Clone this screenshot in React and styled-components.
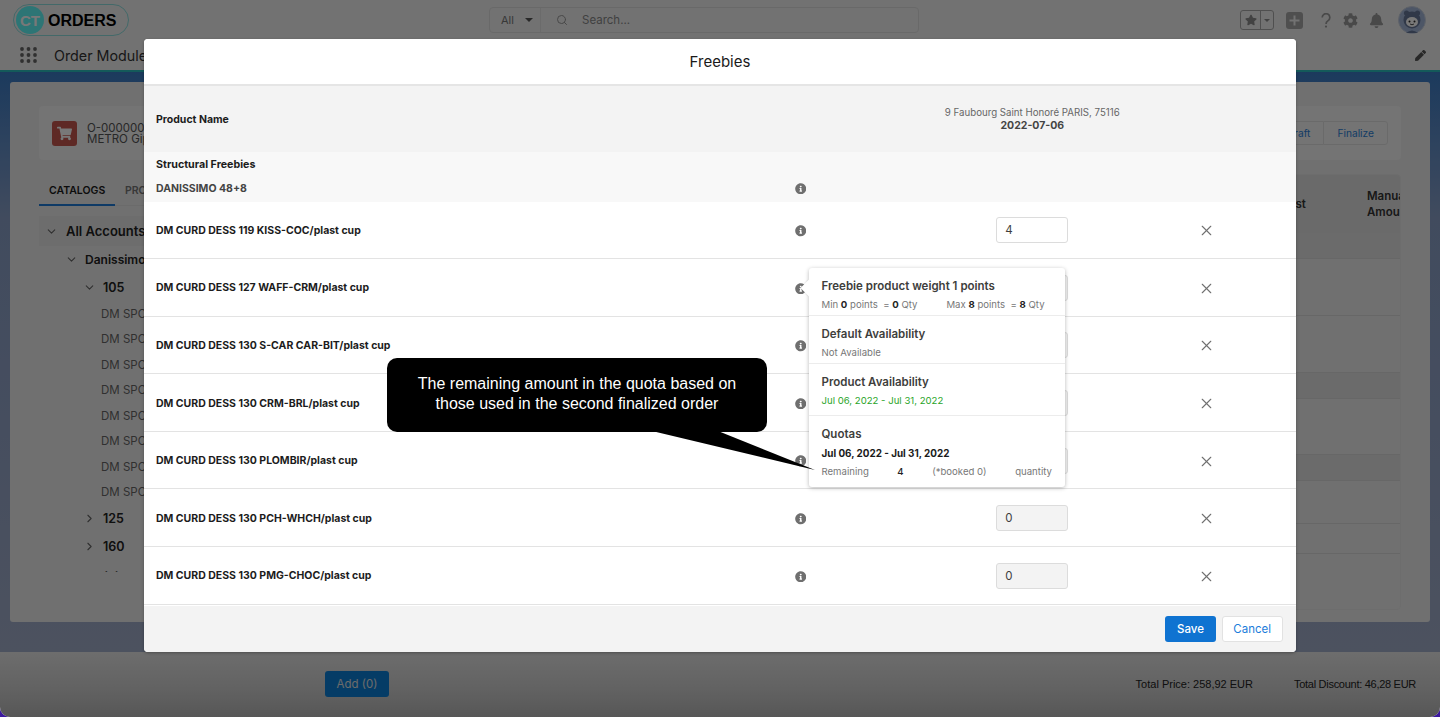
import React from 'react';
import styled, { createGlobalStyle } from 'styled-components';
import { ChevronDown, ChevronRight, Search, X } from 'lucide-react';
import { FaBell, FaCog, FaInfoCircle, FaPen, FaShoppingCart, FaStar } from 'react-icons/fa';

const Global = createGlobalStyle`
  html, body { margin: 0; height: 717px; overflow: hidden; background: #3d1aa0; }
  body { font-family: Inter, "Liberation Sans", sans-serif; }
  * { box-sizing: border-box; }
`;

const Shell = styled.div`
  position: relative; width: 1440px; height: 717px; display: flex; flex-direction: column;
  overflow: hidden; border-radius: 0 0 10px 10px; background: #eee;
`;
const TopBar = styled.header`
  height: 40px; flex: none; display: flex; align-items: center; padding: 0 14px 0 13px; background: #f2f2f2;
`;
const LogoPill = styled.div`
  width: 116px; height: 32px; display: flex; align-items: center; gap: 4px; padding-left: 2px;
  border: 1px solid #8fe0e0; border-radius: 16px;
`;
const LogoMark = styled.div`
  width: 28px; height: 28px; border-radius: 50%; background: #60f8f8; color: #fff; display: flex;
  align-items: center; justify-content: center; font: 700 15px "Liberation Sans", sans-serif;
`;
const LogoWord = styled.span`font: 700 16px "Liberation Sans", sans-serif; color: #000; padding-top: 1px;`;
const SearchBar = styled.div`
  width: 430px; height: 26px; margin-left: 360px; display: flex; align-items: center;
  border: 1px solid #e0e0e0; border-radius: 4px; background: #f2f2f2; color: #777; font-size: 11px;
`;
const ScopeSelect = styled.div`
  width: 51px; height: 100%; display: flex; align-items: center; gap: 11px; padding-left: 11px;
  border-right: 1px solid #e4e4e4;
`;
const Caret = styled.span`
  width: 0; height: 0; border-left: ${p => p.$s}px solid transparent; border-right: ${p => p.$s}px solid transparent;
  border-top: ${p => p.$s}px solid ${p => p.$c};
`;
const SearchText = styled.span`margin-left: 14px; color: #8a8a8a; font-size: 11.5px;`;
const SearchGlyph = styled.span`margin-left: 15px; display: flex; color: #999;`;
const Actions = styled.div`margin-left: auto; display: flex; align-items: center;`;
const StarGroup = styled.div`
  width: 34px; height: 20px; display: flex; border: 1px solid #a9a9a9; border-radius: 3px;
  align-items: center; color: #8c8c8c;
`;
const StarCell = styled.span`
  width: 20px; height: 100%; display: flex; align-items: center; justify-content: center; border-right: 1px solid #a9a9a9;
`;
const CaretCell = styled.span`flex: 1; display: flex; justify-content: center;`;
const PlusTile = styled.svg`margin-left: 12px;`;
const HelpMark = styled.svg`margin-left: 18px;`;
const ActionIcon = styled.span`display: flex; color: #9b9b9b; margin-left: ${p => p.$ml}px;`;
const Avatar = styled.svg`margin-left: 14px;`;

const NavBar = styled.nav`
  height: 32px; flex: none; display: flex; align-items: center; padding: 0 14px 0 20px; background: #f2f2f2;
  border-bottom: 2px solid #2cc0c0; color: #333;
`;
const AppGrid = styled.svg`flex: none;`;
const ModuleName = styled.span`margin-left: 17px; font-size: 14.3px; color: #333;`;
const EditIcon = styled.span`margin-left: auto; display: flex; color: #555;`;

const Main = styled.main`
  flex: 1; min-height: 0; padding: 10px 10px 30px;
  background: linear-gradient(180deg, #3b7cc6 0%, #8aa0c8 25%, #a2aecb 100%);
`;
const Card = styled.section`
  height: 100%; padding: 24px 29px 10px; background: #eee; border-radius: 3px; display: flex; flex-direction: column;
`;
const SummaryPanel = styled.div`
  height: 54px; flex: none; display: flex; align-items: center; justify-content: space-between;
  padding: 0 13px; background: #f6f6f6; border-radius: 4px;
`;
const OrderIdentity = styled.div`display: flex; align-items: center; gap: 10px;`;
const OrderTile = styled.div`
  width: 25px; height: 25px; border-radius: 3px; background: #c7584f; color: #fff; display: flex;
  align-items: center; justify-content: center;
`;
const OrderText = styled.div`font-size: 11.5px; line-height: 11px; color: #555; padding-top: 1px;`;
const ButtonGroup = styled.div`display: flex;`;
const OutlineBtn = styled.div`
  height: 24px; padding: 0 13px; display: flex; align-items: center; font-size: 10.2px; color: #2a80d8;
  border: 1px solid #e2e2e2; background: #f6f6f6; margin-left: -1px;
  &:first-child { border-radius: 3px 0 0 3px; }
  &:last-child { border-radius: 0 3px 3px 0; }
`;
const Columns = styled.div`flex: 1; min-height: 0; display: flex; gap: 16px; margin-top: 14px;`;
const LeftColumn = styled.div`width: 420px; flex: none; display: flex; flex-direction: column;`;
const Tabs = styled.div`height: 32px; flex: none; display: flex; border-bottom: 1px solid #e4e4e4;`;
const Tab = styled.div`
  width: ${p => p.$w}px; height: 32px; padding: 10px 0 0 ${p => p.$pad}px; font-size: 10.5px; white-space: nowrap;
  font-weight: 600; color: ${p => p.$active ? '#1a1a1a' : '#777'};
  border-bottom: ${p => p.$active ? '2px solid #1f7cd8' : 'none'};
`;
const Tree = styled.div`height: 356px; margin-top: 10px; overflow: hidden;`;
const TreeRow = styled.div`
  display: flex; align-items: center; height: ${p => p.$h}px; padding-left: ${p => p.$pad}px;
  background: ${p => p.$shade ? '#e8e8e8' : 'transparent'};
  font-size: ${p => p.$fs}px; font-weight: 600; color: #222;
`;
const TreeArrow = styled.span`width: ${p => p.$w}px; flex: none; display: flex; color: #666;`;
const TreeLeaf = styled.div`
  height: 25.5px; padding-left: 62px; display: flex; align-items: center; font-size: 11.5px; color: #666;
`;
const DataTable = styled.div`
  flex: 1; min-width: 0; height: 436px; border: 1px solid #e8e8e8; border-radius: 4px; overflow: hidden;
`;
const TableHead = styled.div`
  height: 58px; background: #e2e2e2; display: flex; align-items: center;
  justify-content: flex-end; font-size: 11.5px; font-weight: 600; color: #333; overflow: hidden;
`;
const HeadLabel = styled.div`width: ${p => p.$w}px; flex: none; line-height: 16px; white-space: nowrap;`;
const TableRow = styled.div`
  height: ${p => p.$h}px; background: ${p => p.$shade ? '#e4e4e4' : 'transparent'};
  border-bottom: 1px solid #dcdcdc;
`;

const FooterBar = styled.footer`
  height: 65px; flex: none; display: flex; align-items: center; padding: 0 24px 1px 325px;
  background: linear-gradient(180deg, #e8e8e8 0%, #cfcfcf 60%, #b8b8b8 100%);
`;
const AddButton = styled.div`
  width: 64px; height: 25.5px; border-radius: 3px; background: #0b80d8; color: #e4e4e4; display: flex;
  align-items: center; justify-content: center; font-size: 11.5px;
`;
const Totals = styled.div`
  margin-left: auto; display: flex; gap: 41px; font: 11px "Liberation Sans", sans-serif; color: #222;
`;
const TotalItem = styled.span`letter-spacing: ${p => p.$track}px;`;

const Scrim = styled.div`position: absolute; inset: 0; background: rgba(0, 0, 0, 0.53);`;
const Modal = styled.div`
  position: absolute; left: 144.3px; top: 38.5px; width: 1151.4px; height: 613.3px; background: #fff;
  border-radius: 4px; display: flex; flex-direction: column; box-shadow: 0 1px 3px rgba(0,0,0,.3);
`;
const ModalHeader = styled.div`
  height: 47.5px; flex: none; display: flex; align-items: center; justify-content: center; padding-top: 1px;
  border-bottom: 2px solid #e5e5e5; font-size: 15px; color: #1a1a1a; background: #fff; border-radius: 4px 4px 0 0;
`;
const RowGrid = styled.div`
  display: grid; grid-template-columns: 640px 32px 368px 44px 1fr; align-items: center;
`;
const ColumnHead = styled(RowGrid)`height: 65.5px; flex: none; background: #f3f3f3;`;
const NameCell = styled.div`
  padding: 1px 0 0 11.7px; font-size: 10.5px; font-weight: 700; color: ${p => p.$c || '#1c1c1c'};
`;
const StoreCell = styled.div`
  grid-column: 3; padding-left: 64px; text-align: center; font-size: 9.7px; line-height: 13px; color: #666;
`;
const StoreDate = styled.div`font-size: 10.5px; font-weight: 700; color: #444;`;
const GroupBlock = styled.div`height: 50px; flex: none; background: #f8f8f8; padding-top: 5px;`;
const GroupTitle = styled.div`
  padding-left: 11.7px; height: 15px; line-height: 15px; font-size: 10.7px; font-weight: 700; color: #1c1c1c;
`;
const GroupRow = styled(RowGrid)`height: 24px; margin-top: 4px;`;
const InfoGlyph = styled.span`display: flex; justify-content: center; color: #6f6f6f; padding-top: 2px;`;
const ProductRow = styled(RowGrid)`height: 57.6px; flex: none; border-bottom: 1.5px solid #e3e3e3;`;
const QtyCell = styled.div`padding-left: 64px; display: flex; justify-content: center; padding-top: 1px;`;
const QtyBox = styled.div`
  width: 72px; height: 26px; padding-left: 8px; display: flex; align-items: center; border-radius: 3px;
  border: 1px solid #dcdcdc; font-size: 11.5px; color: #3e3e3e; background: ${p => p.$off ? '#f3f3f3' : '#fff'};
`;
const RemoveCell = styled.div`display: flex; justify-content: center; color: #707070; padding-top: 2px;`;
const ModalFooter = styled.div`
  flex: 1; display: flex; align-items: center; justify-content: flex-end; gap: 6px; padding: 1px 13px 0 0;
  background: #f3f3f3; border-radius: 0 0 4px 4px; margin-top: 1px;
`;
const SaveBtn = styled.div`
  width: 50.5px; height: 25.5px; border-radius: 3px; background: #0f73d1; color: #fff; display: flex;
  align-items: center; justify-content: center; font-size: 11.5px; font-weight: 500;
`;
const CancelBtn = styled.div`
  width: 61px; height: 25.5px; border-radius: 3px; background: #fff; border: 1px solid #e2e2e2; color: #1c7ddb;
  display: flex; align-items: center; justify-content: center; font-size: 11.5px;
`;

const Popover = styled.div`
  position: absolute; left: 664.7px; top: 229.5px; width: 256px; height: 219px; background: #fff; border-radius: 3px;
  box-shadow: 0 1px 4px rgba(0,0,0,.28); display: flex; flex-direction: column;
  &::before {
    content: ''; position: absolute; left: -6px; top: 14px; width: 12px; height: 12px; background: #fff;
    transform: rotate(45deg); box-shadow: -1px 1px 1px rgba(0,0,0,.06);
  }
`;
const PopSection = styled.div`
  height: ${p => p.$h}px; flex: none; padding: 9.5px 13px 0 12.5px; position: relative;
  border-bottom: ${p => p.$last ? 'none' : '1px solid #ececec'};
`;
const PopTitle = styled.div`font-size: 11.5px; line-height: 16px; font-weight: 600; color: #3e3e3c;`;
const PopLine = styled.div`
  margin-top: ${p => p.$mt ?? 4}px; display: flex; justify-content: ${p => p.$spread ? 'space-between' : 'flex-start'};
  gap: ${p => p.$gap || 0}px; font-size: 9.6px; line-height: 14px; color: ${p => p.$c || '#777'};
`;
const PopDate = styled.div`margin-top: 4px; font-size: 9.9px; line-height: 14px; font-weight: 700; color: #1a1a1a;`;
const Strong = styled.b`font-weight: 700; color: #222;`;
const Value = styled.span`color: #222; font-weight: 500;`;

const Callout = styled.div`
  position: absolute; left: 387px; top: 358px; width: 380px; height: 74px; background: #000; border-radius: 10px;
  color: #fff; font: 16px/20px "Liberation Sans", sans-serif; text-align: center; padding-top: 16px;
`;
const CalloutTail = styled.svg`position: absolute; left: 0; top: 0; overflow: visible;`;

const leafs = Array.from({ length: 8 });
const products = [
  ['DM CURD DESS 119 KISS-COC/plast cup', '4', false],
  ['DM CURD DESS 127 WAFF-CRM/plast cup', '0', true],
  ['DM CURD DESS 130 S-CAR CAR-BIT/plast cup', '0', true],
  ['DM CURD DESS 130 CRM-BRL/plast cup', '0', true],
  ['DM CURD DESS 130 PLOMBIR/plast cup', '0', true],
  ['DM CURD DESS 130 PCH-WHCH/plast cup', '0', true],
  ['DM CURD DESS 130 PMG-CHOC/plast cup', '0', true],
];
const tableRows = [[26, true], [57], [57], [26, true], [56], [26, true], [43], [30]];

export default function App() {
  return (
    <Shell>
      <Global />
      <TopBar>
        <LogoPill>
          <LogoMark>CT</LogoMark>
          <LogoWord>ORDERS</LogoWord>
        </LogoPill>
        <SearchBar>
          <ScopeSelect>All <Caret $s={4.5} $c="#555" /></ScopeSelect>
          <SearchGlyph><Search size={12} /></SearchGlyph>
          <SearchText>Search...</SearchText>
        </SearchBar>
        <Actions>
          <StarGroup>
            <StarCell><FaStar size={12} /></StarCell>
            <CaretCell><Caret $s={3.5} $c="#8c8c8c" /></CaretCell>
          </StarGroup>
          <PlusTile width="17" height="17" viewBox="0 0 17 17">
            <rect width="17" height="17" rx="3" fill="#a8a8a8" />
            <path d="M8.5 3.5v10M3.5 8.5h10" stroke="#f2f2f2" strokeWidth="2" />
          </PlusTile>
          <HelpMark width="10" height="15" viewBox="0 0 10 15" fill="none">
            <path d="M1.2 4.4a3.8 3.8 0 1 1 5.9 3.2C5.6 8.6 5 9.4 5 11" stroke="#9b9b9b" strokeWidth="1.7" />
            <circle cx="5" cy="13.6" r="1.1" fill="#9b9b9b" />
          </HelpMark>
          <ActionIcon $ml={12}><FaCog size={15} /></ActionIcon>
          <ActionIcon $ml={11}><FaBell size={15} /></ActionIcon>
          <Avatar width="28" height="28" viewBox="0 0 28 28">
            <circle cx="14" cy="14" r="13.5" fill="#a3b6d8" stroke="#c8d0de" />
            <circle cx="8.5" cy="7" r="2.6" fill="#66789a" />
            <circle cx="19.5" cy="7" r="2.6" fill="#66789a" />
            <circle cx="14" cy="14" r="8.5" fill="#66789a" />
            <ellipse cx="14" cy="16" rx="6" ry="5" fill="#fff" />
            <circle cx="11.5" cy="15.5" r="1" fill="#222" />
            <circle cx="16.5" cy="15.5" r="1" fill="#222" />
            <path d="M12 18q2 1.5 4 0" stroke="#222" fill="none" strokeWidth=".8" />
            <path d="M8 27q6-5 12 0" fill="#66789a" />
          </Avatar>
        </Actions>
      </TopBar>
      <NavBar>
        <AppGrid width="17" height="16" viewBox="0 0 17 16" fill="#666">
          {[2, 8.5, 15].flatMap(x => [2, 8, 14].map(y => <circle key={`${x}-${y}`} cx={x} cy={y} r="1.9" />))}
        </AppGrid>
        <ModuleName>Order Module</ModuleName>
        <EditIcon><FaPen size={11} /></EditIcon>
      </NavBar>
      <Main>
        <Card>
          <SummaryPanel>
            <OrderIdentity>
              <OrderTile><FaShoppingCart size={15} /></OrderTile>
              <OrderText>O-00000001<br />METRO Gipermarket</OrderText>
            </OrderIdentity>
            <ButtonGroup>
              <OutlineBtn>Save as Draft</OutlineBtn>
              <OutlineBtn>Finalize</OutlineBtn>
            </ButtonGroup>
          </SummaryPanel>
          <Columns>
            <LeftColumn>
              <Tabs>
                <Tab $w={76} $pad={10} $active>CATALOGS</Tab>
                <Tab $w={90} $pad={10}>PROMOTIONS</Tab>
              </Tabs>
              <Tree>
                <TreeRow $h={30} $pad={6} $fs={13} $shade>
                  <TreeArrow $w={21}><ChevronDown size={13} /></TreeArrow>All Accounts...
                </TreeRow>
                <TreeRow $h={27} $pad={26} $fs={12}>
                  <TreeArrow $w={20}><ChevronDown size={13} /></TreeArrow>Danissimo
                </TreeRow>
                <TreeRow $h={28} $pad={44} $fs={12.5}>
                  <TreeArrow $w={20}><ChevronDown size={13} /></TreeArrow>105
                </TreeRow>
                {leafs.map((_, i) => <TreeLeaf key={i}>DM SPOON DESSERT</TreeLeaf>)}
                <TreeRow $h={27} $pad={44} $fs={12.5}>
                  <TreeArrow $w={20}><ChevronRight size={13} /></TreeArrow>125
                </TreeRow>
                <TreeRow $h={28} $pad={44} $fs={12.5}>
                  <TreeArrow $w={20}><ChevronRight size={13} /></TreeArrow>160
                </TreeRow>
                <TreeRow $h={32} $pad={26} $fs={12}>
                  <TreeArrow $w={20}><ChevronRight size={13} /></TreeArrow>Activia
                </TreeRow>
              </Tree>
            </LeftColumn>
            <DataTable>
              <TableHead>
                <HeadLabel $w={87}>Cost</HeadLabel>
                <HeadLabel $w={33}>Manual<br />Amount</HeadLabel>
              </TableHead>
              {tableRows.map(([h, shade], i) => <TableRow key={i} $h={h} $shade={shade} />)}
            </DataTable>
          </Columns>
        </Card>
      </Main>
      <FooterBar>
        <AddButton>Add (0)</AddButton>
        <Totals>
          <TotalItem $track={0}>Total Price: 258,92 EUR</TotalItem>
          <TotalItem $track={-0.28}>Total Discount: 46,28 EUR</TotalItem>
        </Totals>
      </FooterBar>
      <Scrim>
        <Modal>
          <ModalHeader>Freebies</ModalHeader>
          <ColumnHead>
            <NameCell>Product Name</NameCell>
            <StoreCell>
              9 Faubourg Saint Honoré PARIS, 75116
              <StoreDate>2022-07-06</StoreDate>
            </StoreCell>
          </ColumnHead>
          <GroupBlock>
            <GroupTitle>Structural Freebies</GroupTitle>
            <GroupRow>
              <NameCell $c="#444">DANISSIMO 48+8</NameCell>
              <InfoGlyph><FaInfoCircle size={11.5} /></InfoGlyph>
            </GroupRow>
          </GroupBlock>
          {products.map(([name, qty, off]) => (
            <ProductRow key={name}>
              <NameCell>{name}</NameCell>
              <InfoGlyph><FaInfoCircle size={11.5} /></InfoGlyph>
              <QtyCell><QtyBox $off={off}>{qty}</QtyBox></QtyCell>
              <RemoveCell><X size={17} strokeWidth={1.6} /></RemoveCell>
            </ProductRow>
          ))}
          <ModalFooter>
            <SaveBtn>Save</SaveBtn>
            <CancelBtn>Cancel</CancelBtn>
          </ModalFooter>
          <Popover>
            <PopSection $h={48}>
              <PopTitle>Freebie product weight 1 points</PopTitle>
              <PopLine $gap={29}>
                <span>Min <Strong>0</Strong> points &nbsp;= <Strong>0</Strong> Qty</span>
                <span>Max <Strong>8</Strong> points &nbsp;= <Strong>8</Strong> Qty</span>
              </PopLine>
            </PopSection>
            <PopSection $h={48}>
              <PopTitle>Default Availability</PopTitle>
              <PopLine>Not Available</PopLine>
            </PopSection>
            <PopSection $h={52}>
              <PopTitle>Product Availability</PopTitle>
              <PopLine $c="#2aa52a">Jul 06, 2022 - Jul 31, 2022</PopLine>
            </PopSection>
            <PopSection $h={71} $last>
              <PopTitle>Quotas</PopTitle>
              <PopDate>Jul 06, 2022 - Jul 31, 2022</PopDate>
              <PopLine $mt={5} $spread>
                <span>Remaining</span>
                <Value>4</Value>
                <span>(*booked 0)</span>
                <span>quantity</span>
              </PopLine>
            </PopSection>
          </Popover>
        </Modal>
        <Callout>
          The remaining amount in the quota based on<br />those used in the second finalized order
          <CalloutTail width="380" height="74" viewBox="0 0 380 74">
            <polygon points="265,73 331,73 428,112" fill="#000" />
          </CalloutTail>
        </Callout>
      </Scrim>
    </Shell>
  );
}
